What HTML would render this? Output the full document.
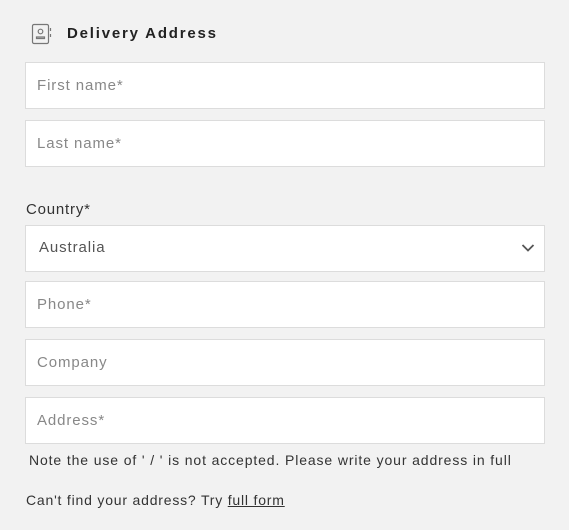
<!DOCTYPE html>
<html><head><style>
body{margin:0;background:#f2f2f2;font-family:"Liberation Sans",sans-serif;width:569px;height:530px;overflow:hidden;position:relative;color:#333}
.f{position:absolute;left:25px;width:518px;height:45px;background:#fff;border:1px solid #dcdcdc;}
.f span{position:absolute;left:11px;top:14px;font-size:15px;letter-spacing:0.9px;color:#888}
.t{position:absolute;font-size:14px;letter-spacing:0.8px;color:#333}
</style></head><body>
<svg style="position:absolute;left:31px;top:23px" width="22" height="22" viewBox="0 0 22 22" fill="none" stroke="#777" stroke-width="1.2">
<rect x="1.5" y="1.5" width="16" height="19" rx="1.5"/>
<circle cx="9.5" cy="8.5" r="2.3"/>
<path d="M5.5 15.5v-1.5h8v1.5z"/>
<path d="M19.5 5v3M19.5 11v3"/>
</svg>
<div class="t" style="left:67px;top:25px;font-size:15px;letter-spacing:1.8px;color:#222;font-weight:bold">Delivery Address</div>
<div class="f" style="top:62px"><span>First name*</span></div>
<div class="f" style="top:120px"><span>Last name*</span></div>
<div class="t" style="left:26px;top:201px;font-size:15px">Country*</div>
<div class="f" style="top:225px"><span style="left:13px;top:13px;color:#555">Australia</span>
<svg style="position:absolute;right:9px;top:17px" width="14" height="10" viewBox="0 0 14 10"><path d="M1.5 2l5.5 5.5 5.5-5.5" fill="none" stroke="#555" stroke-width="1.8"/></svg></div>
<div class="f" style="top:281px"><span>Phone*</span></div>
<div class="f" style="top:339px"><span>Company</span></div>
<div class="f" style="top:397px"><span>Address*</span></div>
<div class="t" style="left:29px;top:452px;letter-spacing:0.88px">Note the use of ' / ' is not accepted. Please write your address in full</div>
<div class="t" style="left:26px;top:492px">Can't find your address? Try <u>full form</u></div>
</body></html>
